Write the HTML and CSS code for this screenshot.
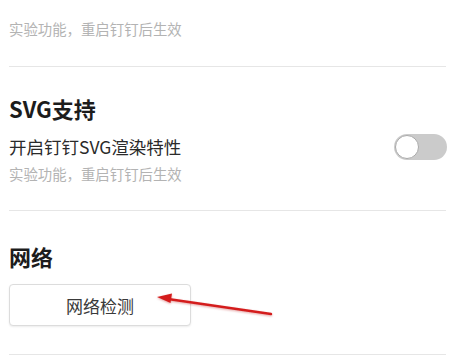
FILE: index.html
```html
<!DOCTYPE html>
<html lang="zh-CN">
<head>
<meta charset="utf-8">
<title>设置</title>
<link rel="stylesheet" href="styles.css">
</head>
<body>
<div class="page">
  <section class="section section-top">
    <p class="desc">实验功能，重启钉钉后生效</p>
  </section>
  <section class="section section-svg">
    <h2 class="title">SVG支持</h2>
    <div class="row">
      <span class="label">开启钉钉SVG渲染特性</span>
      <span class="switch"><span class="knob"></span></span>
    </div>
    <p class="desc">实验功能，重启钉钉后生效</p>
  </section>
  <section class="section section-net">
    <h2 class="title">网络</h2>
    <button class="btn" type="button">网络检测</button>
  </section>
</div>
<svg class="arrow" width="456" height="361" viewBox="0 0 456 361" aria-hidden="true">
  <defs>
    <filter id="sh" x="-10%" y="-50%" width="120%" height="200%">
      <feDropShadow dx="0" dy="1" stdDeviation="1" flood-color="#b00000" flood-opacity="0.35"/>
    </filter>
  </defs>
  <g filter="url(#sh)">
    <line x1="271" y1="314" x2="168" y2="299" stroke="#d41f1f" stroke-width="2.4" stroke-linecap="round"/>
    <polygon points="157,297 172,293.5 170.5,303" fill="#d41f1f"/>
  </g>
</svg>
</body>
</html>
```
FILE: styles.css
```css
* { box-sizing: border-box; }
html, body {
  margin: 0;
  padding: 0;
  background: #ffffff;
}
body {
  width: 456px;
  height: 361px;
  overflow: hidden;
  position: relative;
  font-family: "Noto Sans CJK SC", "Noto Sans", sans-serif;
}
.page {
  padding: 0 10px 0 9px;
}
.section {
  border-bottom: 1px solid #e6e6e6;
}
.section-top {
  padding: 19px 0 27px;
}
.section-svg {
  padding: 26px 0 26px;
}
.section-net {
  padding: 30px 0 28px;
}
.title {
  margin: 0;
  font-size: 22px;
  line-height: 30px;
  font-weight: 700;
  color: #1c1c1c;
}
.row {
  margin-top: 11px;
  height: 26px;
  display: flex;
  align-items: center;
  justify-content: space-between;
}
.label {
  font-size: 17.5px;
  line-height: 24px;
  color: #2a2a2a;
}
.desc {
  margin: 0;
  font-size: 14.4px;
  line-height: 20px;
  color: #b3b3b3;
}
.section-svg .desc {
  margin-top: 4px;
}
.switch {
  position: relative;
  width: 53px;
  height: 26px;
  border-radius: 13px;
  background: #cbcbcb;
  margin-right: -1px;
}
.knob {
  position: absolute;
  left: 1px;
  top: 1px;
  width: 24px;
  height: 24px;
  border-radius: 50%;
  background: #ffffff;
  border: 1px solid #a9a9a9;
}
.btn {
  display: block;
  margin-top: 13px;
  width: 182px;
  height: 42px;
  padding: 0;
  background: #ffffff;
  border: 1px solid #dcdcdc;
  border-radius: 4px;
  box-shadow: 0 1px 2px rgba(0,0,0,0.08);
  font-family: "Noto Sans CJK SC", "Noto Sans", sans-serif;
  font-size: 17px;
  color: #3a3a3a;
}
.arrow {
  position: absolute;
  left: 0;
  top: 0;
  pointer-events: none;
}
```
